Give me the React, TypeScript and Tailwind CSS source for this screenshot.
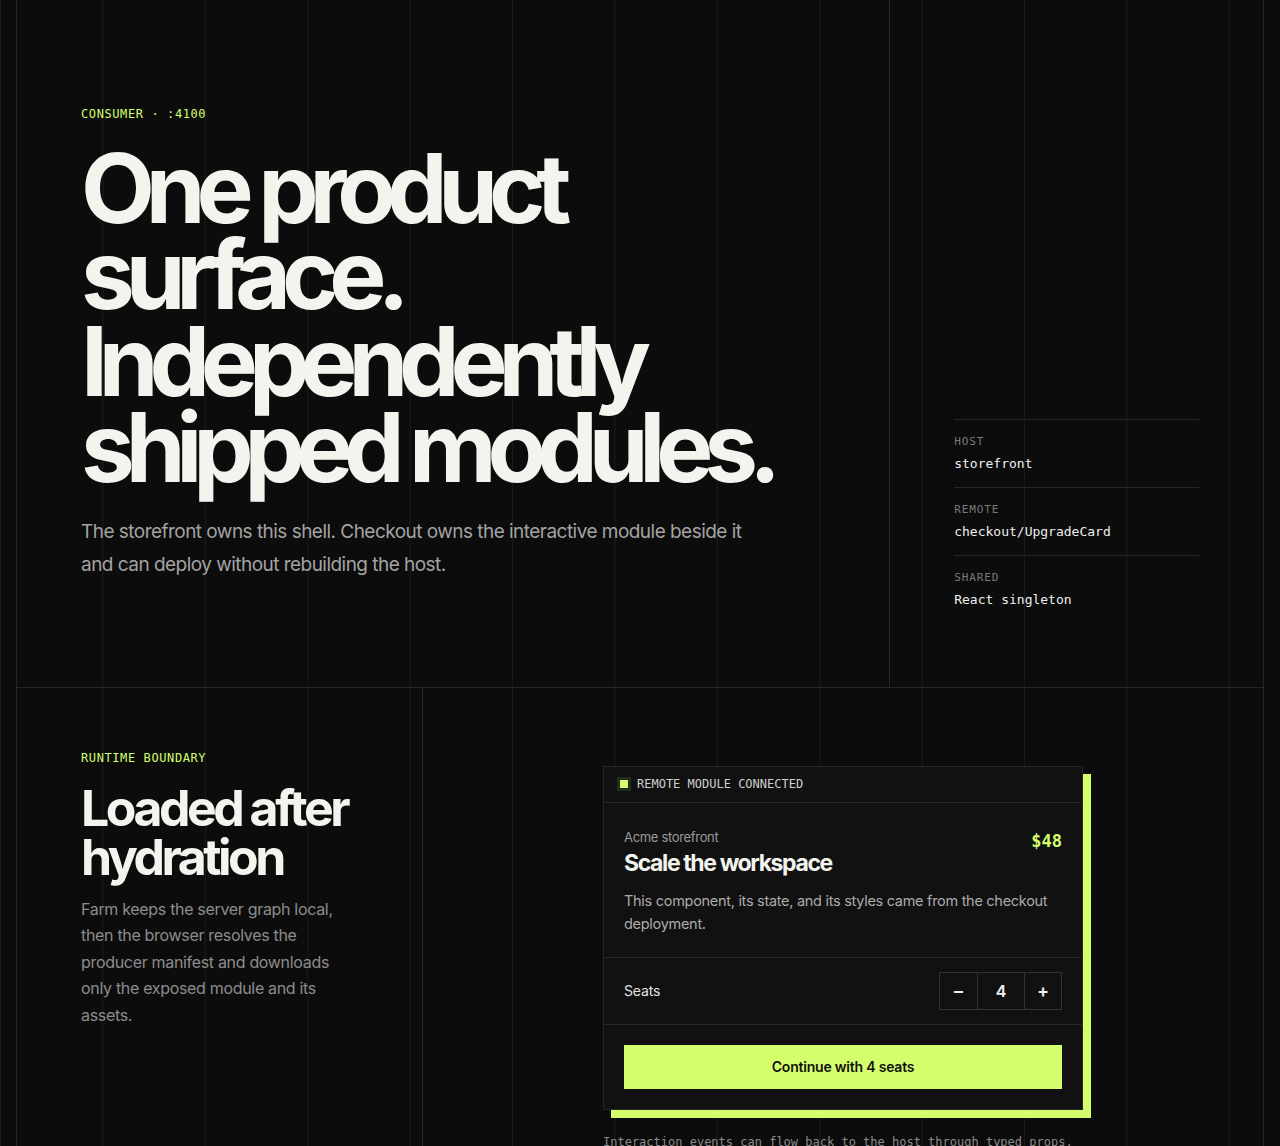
import { useState } from "react";

const mono = "font-['DejaVu_Sans_Mono',monospace]";

type Fact = { label: string; value: string };

const facts: Fact[] = [
  { label: "HOST", value: "storefront" },
  { label: "REMOTE", value: "checkout/UpgradeCard" },
  { label: "SHARED", value: "React singleton" },
];

function UpgradeCard() {
  const [seats, setSeats] = useState(4);

  return (
    <div className="w-[480px] border border-[#262626] bg-[#111111] shadow-[8px_8px_0_#d5fe6d]">
      {/* Header strip */}
      <div className="flex h-9 items-center gap-[9px] border-b border-[#262626] px-4">
        <span className="h-2 w-2 bg-[#d5fe6d] shadow-[0_0_0_3px_rgba(213,254,109,0.12)]" />
        <span className={`${mono} text-[12px] text-[#cfcfcf]`}>REMOTE MODULE CONNECTED</span>
      </div>

      {/* Body */}
      <div className="px-5 pt-[25px] pb-[22px]">
        <div className="flex items-start justify-between">
          <div>
            <p className="text-[13px] leading-[18px] tracking-[-0.025em] text-[#9a9a9a]">
              Acme storefront
            </p>
            <h3 className="mt-[2px] text-[23px] font-bold leading-[30px] tracking-[-0.06em] text-[#f4f4ef]">
              Scale the workspace
            </h3>
          </div>
          <span className={`${mono} mt-[1px] text-[17px] font-bold leading-[24px] text-[#d5fe6d]`}>
            ${seats * 12}
          </span>
        </div>
        <p className="mt-[11px] text-[14.5px] leading-[23px] tracking-[-0.02em] text-[#ababab]">
          This component, its state, and its styles came from the checkout deployment.
        </p>
      </div>

      {/* Seats */}
      <div className="flex items-center justify-between border-t border-[#262626] px-5 py-[14px]">
        <span className="text-[14px] tracking-[-0.01em] text-[#e2e2e2]">Seats</span>
        <div className="flex h-[38px] border border-[#333333]">
          <button
            onClick={() => setSeats((s) => Math.max(1, s - 1))}
            className="w-[37px] text-[18px] font-semibold text-[#f0f0f0]"
          >
            –
          </button>
          <span className="flex w-[48px] items-center justify-center border-x border-[#333333] text-[16px] font-semibold text-[#f0f0f0]">
            {seats}
          </span>
          <button
            onClick={() => setSeats((s) => s + 1)}
            className="w-[36px] text-[18px] font-semibold text-[#f0f0f0]"
          >
            +
          </button>
        </div>
      </div>

      {/* CTA */}
      <div className="border-t border-[#262626] p-5">
        <button className="h-11 w-full bg-[#d5fe6d] text-[14px] font-semibold tracking-[-0.015em] text-[#111111]">
          Continue with {seats} seats
        </button>
      </div>
    </div>
  );
}

export default function App() {
  return (
    <div className="min-h-screen bg-[#0c0c0c] [background-image:linear-gradient(to_right,#1b1b1b_1px,transparent_1px)] [background-size:102.4px_100%] font-['Inter',sans-serif] text-[#f4f4ef]">
      <div className="mx-4 border-x border-[#262626]">
        {/* Hero */}
        <section className="grid grid-cols-[7fr_3fr] border-b border-[#262626]">
          <div className="px-16 pt-[106px] pb-[106px]">
            <p className={`${mono} text-[12px] leading-4 tracking-[0.05em] text-[#d5fe6d]`}>
              CONSUMER · :4100
            </p>
            <h1 className="mt-[23px] text-[96px] font-bold leading-[0.9] tracking-[-0.095em] text-[#f4f4ef]">
              One product
              <br />
              surface.
              <br />
              Independently
              <br />
              shipped modules.
            </h1>
            <p className="mt-6 max-w-[690px] text-[19px] leading-[33px] tracking-[-0.028em] text-[#a3a3a3]">
              The storefront owns this shell. Checkout owns the interactive module beside it and can
              deploy without rebuilding the host.
            </p>
          </div>

          <aside className="flex flex-col justify-end border-l border-[#262626] px-16 pb-16">
            {facts.map((f) => (
              <div key={f.label} className="border-t border-[#262626] pt-[14px] pb-[13px]">
                <p className={`${mono} text-[11px] leading-4 tracking-[0.08em] text-[#7a7a7a]`}>
                  {f.label}
                </p>
                <p className={`${mono} mt-1 text-[13px] leading-5 text-[#efefef]`}>{f.value}</p>
              </div>
            ))}
          </aside>
        </section>

        {/* Runtime boundary */}
        <section className="grid grid-cols-[405px_1fr]">
          <div className="px-16 pt-[62px]">
            <p className={`${mono} text-[12px] leading-4 tracking-[0.05em] text-[#d5fe6d]`}>
              RUNTIME BOUNDARY
            </p>
            <h2 className="mt-[18px] text-[50px] font-bold leading-[49px] tracking-[-0.07em] text-[#f4f4ef]">
              Loaded after hydration
            </h2>
            <p className="mt-[14px] text-[16px] leading-[26.5px] tracking-[-0.02em] text-[#8c8c8c]">
              Farm keeps the server graph local, then the browser resolves the producer manifest and
              downloads only the exposed module and its assets.
            </p>
          </div>

          <div className="flex flex-col items-center border-l border-[#262626] pt-[78px] pb-24">
            <div className="w-[480px]">
              <UpgradeCard />
              <p className={`${mono} mt-6 text-[12px] leading-4 text-[#8a8a8a]`}>
                Interaction events can flow back to the host through typed props.
              </p>
            </div>
          </div>
        </section>
      </div>
    </div>
  );
}
